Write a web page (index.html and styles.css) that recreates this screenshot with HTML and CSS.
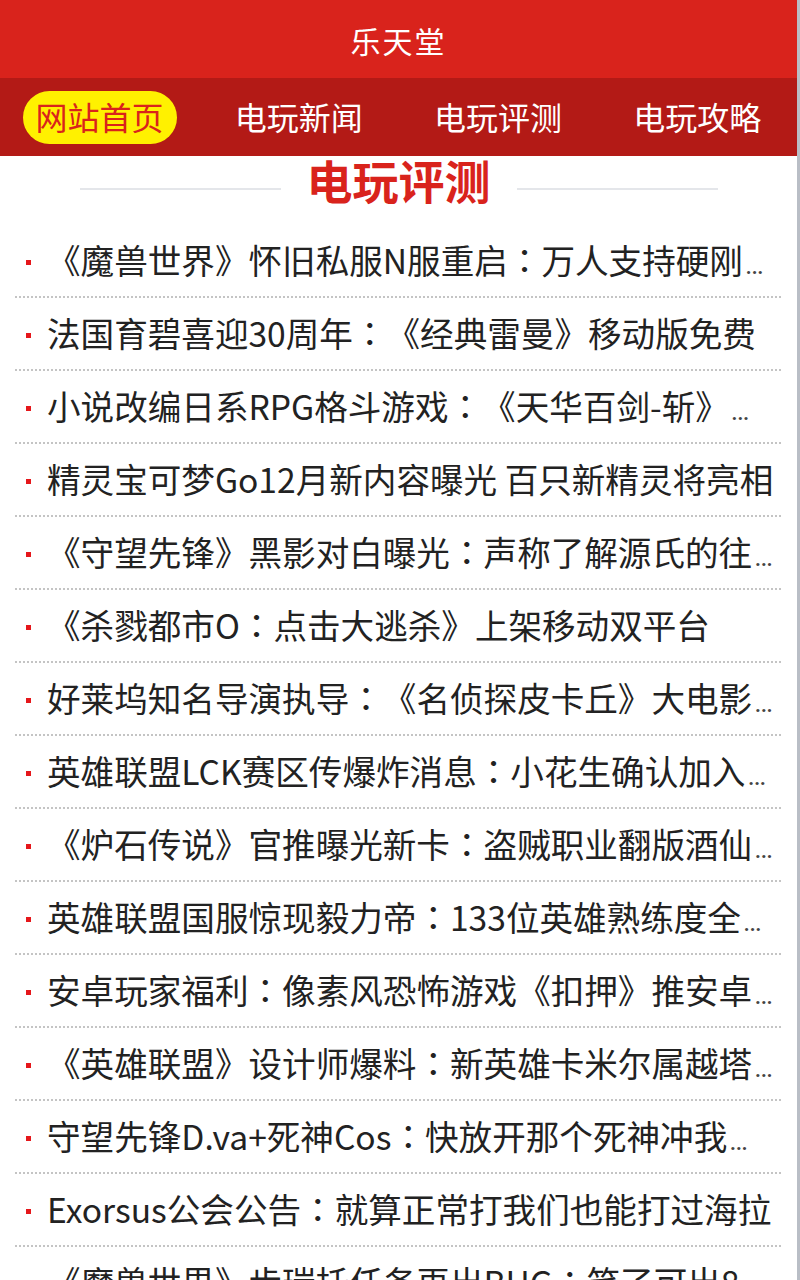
FILE: index.html
```html
<!DOCTYPE html>
<html lang="zh-CN">
<head>
<meta charset="utf-8">
<title>乐天堂</title>
<link rel="stylesheet" href="styles.css">
</head>
<body>
<div class="page">
  <header class="topbar">乐天堂</header>
  <nav class="nav">
    <a class="nav-item"><span class="nav-label active">网站首页</span></a>
    <a class="nav-item"><span class="nav-label">电玩新闻</span></a>
    <a class="nav-item"><span class="nav-label">电玩评测</span></a>
    <a class="nav-item"><span class="nav-label">电玩攻略</span></a>
  </nav>
  <div class="section-title">
    <span class="rule"></span>
    <h2>电玩评测</h2>
    <span class="rule"></span>
  </div>
  <ul class="news">
    <li><span class="dot"></span><span class="t">《魔兽世界》怀旧私服N服重启<span class="p" lang="zh-TW">：</span>万人支持硬刚<span class="ell">…</span></span></li>
    <li><span class="dot"></span><span class="t">法国育碧喜迎30周年<span class="p" lang="zh-TW">：</span>《经典雷曼》移动版免费</span></li>
    <li><span class="dot"></span><span class="t">小说改编日系RPG格斗游戏<span class="p" lang="zh-TW">：</span>《天华百剑-斩》<span class="ell">…</span></span></li>
    <li><span class="dot"></span><span class="t">精灵宝可梦Go12月新内容曝光 百只新精灵将亮相</span></li>
    <li><span class="dot"></span><span class="t">《守望先锋》黑影对白曝光<span class="p" lang="zh-TW">：</span>声称了解源氏的往<span class="ell">…</span></span></li>
    <li><span class="dot"></span><span class="t">《杀戮都市O<span class="p" lang="zh-TW">：</span>点击大逃杀》上架移动双平台</span></li>
    <li><span class="dot"></span><span class="t">好莱坞知名导演执导<span class="p" lang="zh-TW">：</span>《名侦探皮卡丘》大电影<span class="ell">…</span></span></li>
    <li><span class="dot"></span><span class="t">英雄联盟LCK赛区传爆炸消息<span class="p" lang="zh-TW">：</span>小花生确认加入<span class="ell">…</span></span></li>
    <li><span class="dot"></span><span class="t">《炉石传说》官推曝光新卡<span class="p" lang="zh-TW">：</span>盗贼职业翻版酒仙<span class="ell">…</span></span></li>
    <li><span class="dot"></span><span class="t">英雄联盟国服惊现毅力帝<span class="p" lang="zh-TW">：</span>133位英雄熟练度全<span class="ell">…</span></span></li>
    <li><span class="dot"></span><span class="t">安卓玩家福利<span class="p" lang="zh-TW">：</span>像素风恐怖游戏《扣押》推安卓<span class="ell">…</span></span></li>
    <li><span class="dot"></span><span class="t">《英雄联盟》设计师爆料<span class="p" lang="zh-TW">：</span>新英雄卡米尔属越塔<span class="ell">…</span></span></li>
    <li><span class="dot"></span><span class="t">守望先锋D.va+死神Cos<span class="p" lang="zh-TW">：</span>快放开那个死神冲我<span class="ell">…</span></span></li>
    <li><span class="dot"></span><span class="t">Exorsus公会公告<span class="p" lang="zh-TW">：</span>就算正常打我们也能打过海拉</span></li>
    <li><span class="dot"></span><span class="t">《魔兽世界》步瑞托任务再出BUG<span class="p" lang="zh-TW">：</span>笑了可出8<span class="ell">…</span></span></li>
  </ul>
</div>
</body>
</html>
```

FILE: styles.css
```css
html, body {
  margin: 0;
  padding: 0;
  background: #ffffff;
}
body {
  font-family: "Noto Sans CJK SC", "Noto Sans", sans-serif;
  color: #222222;
  text-spacing-trim: space-all;
}
.page {
  width: 797px;
  border-right: 3px solid #b9bec6;
  min-height: 1280px;
  overflow: hidden;
}
.topbar {
  height: 78px;
  background: #d9231c;
  color: #ffffff;
  font-size: 30px;
  letter-spacing: 2px;
  display: flex;
  align-items: center;
  justify-content: center;
  padding-top: 2px;
  box-sizing: border-box;
}
.nav {
  height: 78px;
  background: #b31a16;
  display: grid;
  grid-template-columns: repeat(4, 1fr);
  align-items: center;
}
.nav-item {
  display: flex;
  justify-content: center;
}
.nav-label {
  color: #ffffff;
  font-size: 32px;
  line-height: 50px;
  height: 53px;
  padding: 0 13px;
  border-radius: 27px;
  box-sizing: border-box;
}
.nav-label.active {
  background: #fff100;
  color: #d9231c;
}
.section-title {
  height: 69px;
  display: flex;
  align-items: flex-start;
  justify-content: center;
  gap: 26px;
}
.section-title h2 {
  margin: 0;
  font-size: 46px;
  line-height: 46px;
  font-weight: bold;
  color: #d9231c;
}
.rule {
  width: 201px;
  height: 2px;
  background: #e4e6ea;
  margin-top: 32px;
}
.news {
  list-style: none;
  margin: 0 16px 0 15px;
  padding: 0;
}
.news li {
  height: 73px;
  box-sizing: border-box;
  border-bottom: 2px dotted #c4c4c4;
  display: flex;
  align-items: center;
  padding-bottom: 3px;
}
.dot {
  flex: none;
  width: 5px;
  height: 5px;
  background: #e5171b;
  margin: 6px 16px 0 11px;
}
.t {
  flex: 1;
  min-width: 0;
  font-size: 33.6px;
  white-space: nowrap;
  overflow: hidden;
  color: #222222;
}
.p {
  font-family: "Noto Sans CJK TC", "Noto Sans CJK SC", sans-serif;
}
.ell {
  font-family: Roboto, "Liberation Sans", sans-serif;
  font-size: 28px;
  color: #444;
  margin-left: 2px;
}
```
